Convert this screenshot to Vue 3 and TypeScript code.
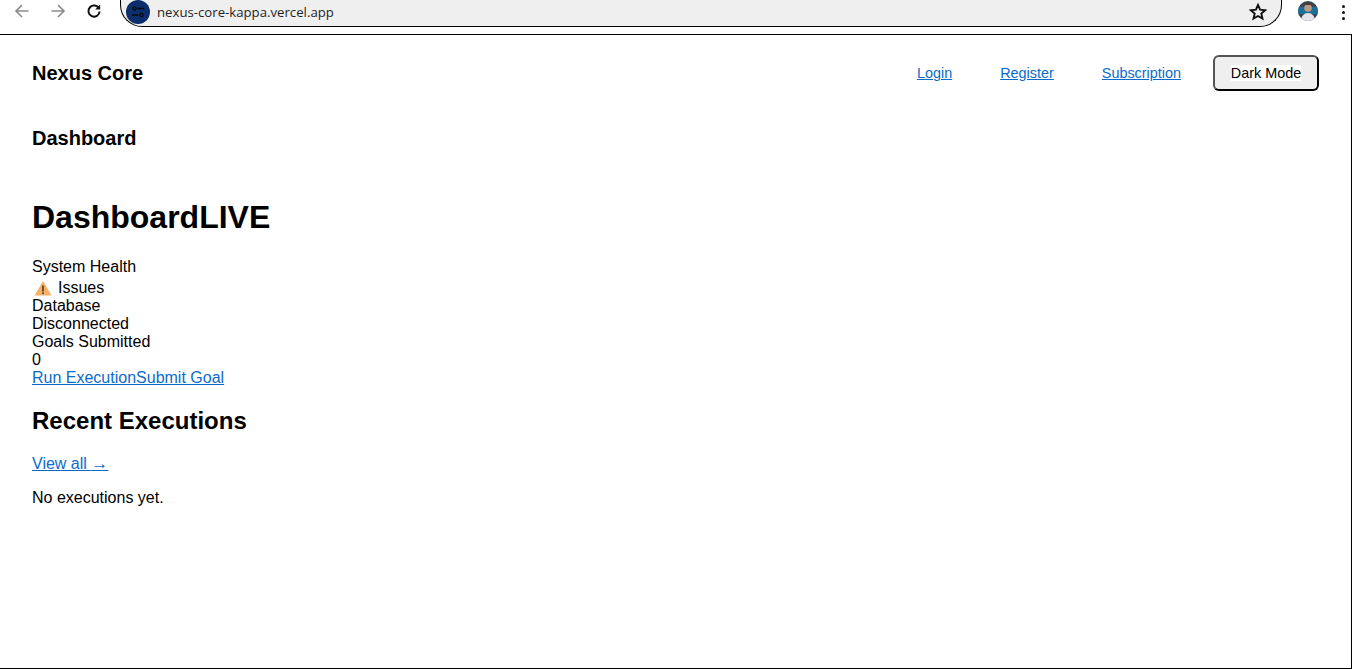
<script setup lang="ts">
const navLinks: string[] = ['Login', 'Register', 'Subscription']
</script>

<template>
  <div class="window">
    <header class="chrome">
      <div class="tools">
        <svg class="tool" width="16" height="16" viewBox="0 0 16 16" fill="none" stroke="#8a8a8a" stroke-width="1.6"><path d="M14.5 8H2M8 2L2 8l6 6" /></svg>
        <svg class="tool" width="16" height="16" viewBox="0 0 16 16" fill="none" stroke="#8a8a8a" stroke-width="1.6"><path d="M1.500 8H14M8 2l6 6-6 6" /></svg>
        <svg class="tool" width="16" height="16" viewBox="0 0 16 16" fill="none" stroke="#111" stroke-width="2"><path d="M13 5.500A5.600 5.600 0 1 0 13.600 8.500" /><path d="M14.200 1.500v5H9.200" fill="#111" stroke="none" /></svg>
      </div>
      <div class="omnibox">
        <span class="site">
          <svg width="14" height="14" viewBox="0 0 14 14" fill="none" stroke="#060a12" stroke-width="1.300"><circle cx="3.500" cy="3.500" r="1.600" /><path d="M6.500 3.500H13M1 10h6.500" /><circle cx="10.500" cy="10" r="1.600" /></svg>
        </span>
        <span class="url">nexus-core-kappa.vercel.app</span>
        <svg class="star" width="18" height="18" viewBox="0 0 18 18" fill="none" stroke="#111" stroke-width="1.900"><path d="M9 2l2.100 4.700 5.100.5-3.900 3.400 1.200 5L9 13l-4.500 2.600 1.200-5L1.800 7.200l5.100-.5z" /></svg>
      </div>
      <div class="avatar">
        <svg width="20" height="20" viewBox="0 0 20 20"><rect width="20" height="20" fill="#3a4650" /><rect x="0" y="6" width="20" height="7" fill="#1c6f98" /><circle cx="10" cy="7" r="3.800" fill="#c09a86" /><path d="M6 4c1-3 7-3 8 0z" fill="#4a3a34" /><path d="M3 20c0-5 3-8 7-8s7 3 7 8z" fill="#e6e3e8" /></svg>
      </div>
      <div class="menu"><i></i><i></i><i></i></div>
    </header>

    <main class="page">
      <nav class="topbar">
        <strong class="brand">Nexus Core</strong>
        <div class="links">
          <a v-for="link in navLinks" :key="link" href="#">{{ link }}</a>
          <button type="button"><span>Dark Mode</span></button>
        </div>
      </nav>

      <h2 class="crumb">Dashboard</h2>

      <h1>Dashboard<span>LIVE</span></h1>

      <section class="stats">
        <div class="health-label">System Health</div>
        <div class="health-value">
          <svg width="18" height="16" viewBox="0 0 18 16"><path d="M9 1L17.500 15.500H.5z" fill="#f8b066" /><rect x="8.100" y="5.500" width="1.800" height="6" fill="#5a4630" /><rect x="8.100" y="12.300" width="1.800" height="1.800" fill="#5a4630" /></svg>
          <span>Issues</span>
        </div>
        <div>Database</div>
        <div>Disconnected</div>
        <div>Goals Submitted</div>
        <div>0</div>
        <div><a href="#">Run Execution</a><a href="#">Submit Goal</a></div>
      </section>

      <h2 class="recent">Recent Executions</h2>
      <p class="view"><a href="#">View all <span class="arrow">→</span></a></p>
      <p class="empty">No executions yet.</p>
    </main>
  </div>
</template>

<style scoped>
.window {
  width: 1352px;
  height: 669px;
  display: flex;
  flex-direction: column;
  background: #fff;
  color: #000;
  font-family: "Liberation Sans", Arial, sans-serif;
  font-size: 16px;
  overflow: hidden;
}
.chrome {
  height: 34px;
  flex: none;
  display: flex;
  align-items: flex-start;
  border-bottom: 1px solid #000;
  box-sizing: content-box;
}
.tools {
  width: 120px;
  flex: none;
  height: 22px;
  display: flex;
  align-items: center;
  gap: 20px;
  padding-left: 14px;
  box-sizing: border-box;
}
.omnibox {
  width: 1162px;
  height: 28px;
  margin-top: -1px;
  flex: none;
  display: flex;
  align-items: center;
  box-sizing: border-box;
  background: #efefef;
  border: 1px solid #000;
  border-top: none;
  border-radius: 0 0 22px 22px;
  padding: 0 14px 2px 5px;
}
.site {
  width: 24px;
  height: 24px;
  border-radius: 50%;
  background: #0c2f6b;
  display: flex;
  align-items: center;
  justify-content: center;
  flex: none;
}
.url {
  margin-left: 7px;
  font-family: "Open Sans", "Noto Sans", sans-serif;
  font-size: 13.200px;
  color: #1f1f1f;
  flex: 1;
}
.avatar {
  width: 20px;
  height: 20px;
  border-radius: 50%;
  overflow: hidden;
  margin: 1px 0 0 16px;
  flex: none;
}
.menu {
  margin: 5px 0 0 24px;
  display: flex;
  flex-direction: column;
  gap: 3px;
}
.menu i {
  width: 3px;
  height: 3px;
  border-radius: 50%;
  background: #111;
}
.page {
  flex: 1;
  min-height: 0;
  border-right: 1px solid #000;
  border-bottom: 1px solid #000;
  padding: 20px 32px 0;
}
.topbar {
  height: 36px;
  display: flex;
  align-items: center;
  justify-content: space-between;
}
.brand {
  font-size: 20px;
}
.links {
  display: flex;
  align-items: center;
  font-size: 14.400px;
}
.links a {
  margin-right: 48px;
}
.links a:last-of-type {
  margin-right: 32px;
}
a {
  color: #0b6bcb;
}
button {
  width: 106px;
  height: 36px;
  padding: 0;
  background: #efefef;
  border: 2px outset #000;
  border-radius: 6px;
  font: inherit;
  font-size: 14.400px;
  color: #000;
}
button span {
  background: #fff;
}
h2, h1, p {
  margin: 0;
}
.crumb {
  font-size: 20px;
  line-height: 24px;
  margin-top: 35px;
}
h1 {
  font-size: 32px;
  line-height: 37px;
  margin-top: 49px;
}
.stats {
  margin-top: 22px;
  line-height: 18px;
}
.health-value {
  display: flex;
  align-items: center;
  height: 21px;
  padding-top: 3px;
  box-sizing: border-box;
  gap: 6px;
}
.health-value svg {
  margin-left: 2px;
}
.recent {
  font-size: 24px;
  line-height: 28px;
  margin-top: 20px;
}
.view {
  margin-top: 20px;
  line-height: 18px;
}
.arrow {
  font-family: "Liberation Serif", serif;
  font-size: 17px;
  line-height: 1;
}
.empty {
  margin-top: 16px;
  line-height: 18px;
}
</style>
